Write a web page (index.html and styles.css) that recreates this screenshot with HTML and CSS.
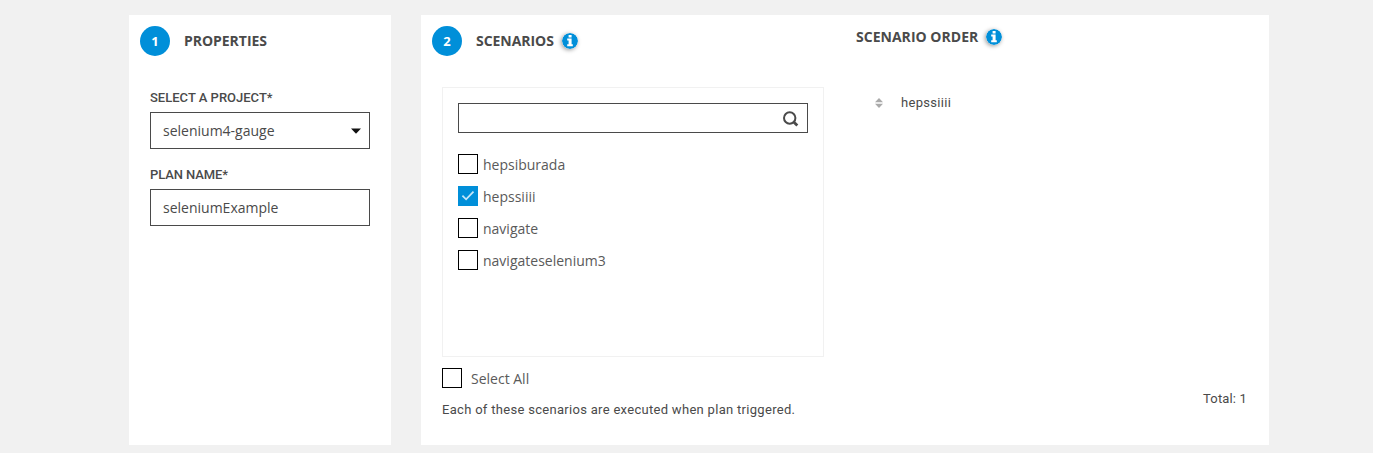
FILE: index.html
```html
<!DOCTYPE html>
<html lang="en">
<head>
<meta charset="utf-8">
<title>Plan</title>
<link rel="stylesheet" href="styles.css">
</head>
<body>
<svg class="defs" width="0" height="0">
  <symbol id="info" viewBox="0 0 16 16">
    <circle cx="8" cy="8" r="8" fill="#008fd9"/>
    <path fill="#fff" d="M6.6 2h3v2.6h-3zM5.2 5.6h4.4v5.6h1.2v2H5.2v-2h1.4V7.6H5.2z"/>
  </symbol>
</svg>
<main class="plan">
  <section class="card properties">
    <header class="head"><span class="step">1</span><h2 class="title title-properties">PROPERTIES</h2></header>
    <div class="form">
      <label class="label label-project">SELECT A PROJECT*</label>
      <div class="field"><span class="value-project">selenium4-gauge</span>
        <svg class="caret" width="10" height="6" viewBox="0 0 10 6"><path d="M0 .5h10L5 5.7z" fill="#111"/></svg>
      </div>
      <label class="label label-plan">PLAN NAME*</label>
      <div class="field"><span class="value-plan">seleniumExample</span></div>
    </div>
  </section>
  <section class="card scenarios">
    <div class="picker">
      <header class="head"><span class="step">2</span><h2 class="title title-scenarios">SCENARIOS</h2><svg class="info" width="16" height="16"><use href="#info"/></svg></header>
      <div class="list">
        <div class="search">
          <svg width="16" height="16" viewBox="0 0 16 16" fill="none" stroke="#4a4a4a"><circle cx="6.7" cy="7" r="5.7" stroke-width="2"/><path d="M10.7 11l3.6 3.6" stroke-width="2.8"/></svg>
        </div>
        <div class="row"><span class="check"></span><span class="name">hepsiburada</span></div>
        <div class="row"><span class="check checked"><svg width="20" height="20" viewBox="0 0 20 20"><path d="M4.4 9.7l3.7 3.6 7.4-7.6" fill="none" stroke="#c5e6f8" stroke-width="1.8"/></svg></span><span class="name">hepssiiii</span></div>
        <div class="row"><span class="check"></span><span class="name">navigate</span></div>
        <div class="row"><span class="check"></span><span class="name">navigateselenium3</span></div>
      </div>
      <div class="all"><span class="check"></span><span>Select All</span></div>
      <p class="note"><span>Each of these scenarios are executed when plan triggered.</span></p>
    </div>
    <div class="order">
      <header class="order-head"><h2 class="title title-order">SCENARIO ORDER</h2><svg class="info" width="16" height="16"><use href="#info"/></svg></header>
      <div class="item">
        <svg width="8" height="10" viewBox="0 0 8 10" fill="#aaa"><path d="M0 4.3h8L4 0zM0 5.7h8l-4 4.3z"/></svg>
        <span class="item-name">hepssiiii</span>
      </div>
      <div class="total"><span>Total: 1</span></div>
    </div>
  </section>
</main>
</body>
</html>
```
FILE: styles.css
```css
* { box-sizing: border-box; }
body { margin: 0; background: #f1f1f1; color: #4a4a4a; font-family: "Open Sans", sans-serif; font-size: 14px; }
.defs { position: absolute; }
.plan { display: flex; gap: 30px; width: 1140px; margin-left: 129px; padding-top: 15px; height: 453px; overflow: hidden; }
.card { height: 430px; background: #fff; }
.properties { width: 262px; }
.scenarios { width: 848px; display: flex; }
.head { display: flex; align-items: center; height: 30px; margin: 11px 0 0 11px; }
.step { width: 30px; height: 30px; border-radius: 50%; background: #008fd9; color: #fff; font-size: 13px; font-weight: 700; line-height: 30px; text-align: center; margin-right: 14px; }
.title { margin: 0; font-size: 14px; font-weight: 700; line-height: 20px; white-space: nowrap; letter-spacing: -0.04px; }
.title-order { letter-spacing: 0.02px; }
.info { margin-left: 8px; border-radius: 50%; box-shadow: -1px 1px 4px rgba(0,0,0,.4); }
.form { padding: 31px 21px 0; }
.label, .note, .order .item, .total { font-family: Roboto, sans-serif; font-size: 13px; }
.note, .order .item { letter-spacing: 0.3px; }
.total { letter-spacing: 0.15px; }
.label { display: block; height: 25px; padding-top: 2px; font-weight: 500; line-height: 17px; }
.label-plan { letter-spacing: -0.1px; }
.field { display: flex; align-items: center; justify-content: space-between; height: 37px; border: 1px solid #4a4a4a; padding: 0 8px 0 12px; font-weight: 400; color: #4a4a4a; }
.field + .label { margin-top: 15px; }
.picker { width: 403px; }
.list { width: 382px; height: 270px; margin: 31px 0 0 21px; border: 1px solid #f1f1f1; padding: 15px; }
.search { display: flex; align-items: center; justify-content: flex-end; height: 30px; border: 1px solid #4a4a4a; padding: 1px 8px 0 0; margin-bottom: 15px; }
.row { display: flex; align-items: center; gap: 5px; height: 32px; color: #5a5a5a; }
.check { width: 20px; height: 20px; border: 1px solid #000; }
.checked { border: 0; background: #008fd9; }
.checked svg { display: block; }
.all { display: flex; align-items: center; gap: 9px; height: 20px; margin: 11px 0 0 21px; color: #5a5a5a; }
.note { margin: 12px 0 0 21px; line-height: 19px; white-space: nowrap; }
.order { flex: 1; display: flex; flex-direction: column; padding: 12px 22px 0 32px; }
.order-head { display: flex; align-items: center; height: 20px; }
.order .item { display: flex; align-items: center; gap: 18px; height: 20px; margin: 46px 0 0 19px; }
.item-name { margin-top: -2px; }
.total { margin-top: 276px; line-height: 20px; text-align: right; }
```
